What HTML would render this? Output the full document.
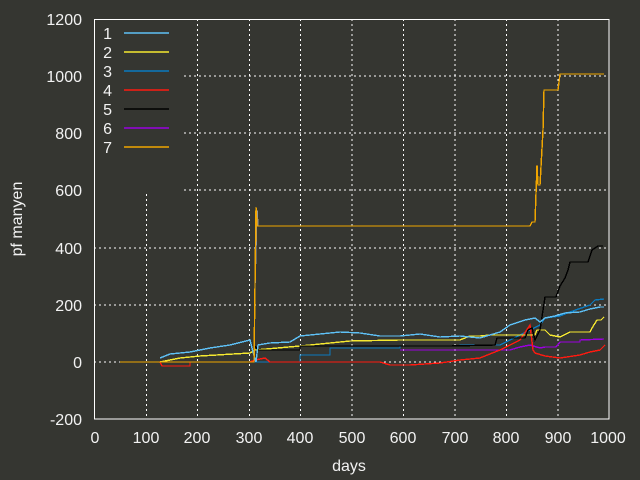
<!DOCTYPE html>
<html><head><style>html,body{margin:0;padding:0;background:#353631}svg{display:block}</style></head><body>
<svg width="640" height="480" xmlns="http://www.w3.org/2000/svg" font-family="Liberation Sans, sans-serif" font-size="16" fill="#f2f2f2">
<rect width="640" height="480" fill="#353631"/>
<g stroke="#fff" stroke-width="1" stroke-dasharray="2,3">
<line x1="94" y1="76" x2="609" y2="76"/><line x1="94" y1="133" x2="609" y2="133"/><line x1="94" y1="190" x2="609" y2="190"/><line x1="94" y1="248" x2="609" y2="248"/><line x1="94" y1="305" x2="609" y2="305"/><line x1="94" y1="362" x2="609" y2="362"/>
<line x1="146.5" y1="19" x2="146.5" y2="419"/><line x1="197.5" y1="19" x2="197.5" y2="419"/><line x1="249.5" y1="19" x2="249.5" y2="419"/><line x1="300.5" y1="19" x2="300.5" y2="419"/><line x1="352" y1="19" x2="352" y2="419"/><line x1="403.5" y1="19" x2="403.5" y2="419"/><line x1="455" y1="19" x2="455" y2="419"/><line x1="506.5" y1="19" x2="506.5" y2="419"/><line x1="558" y1="19" x2="558" y2="419"/>
</g>
<rect x="95" y="20" width="86" height="173" fill="#353631"/>
<g fill="none" stroke-width="1.4" shape-rendering="crispEdges">
<polyline stroke="#0a7ac0" points="200,362 300,362 300,355 330,355 330,348 400,348 400,346 460,346 460,345 500,345 510,340 530,330 540,325 545,318 560,316 570,312 590,305 595,300 604,299"/>
<polyline stroke="#9a00e0" points="400,350 510,350 520,347 530,345 540,348 545,347 556,347 560,342 580,342 580,340 604,339"/>
<polyline stroke="#ff1a10" points="160,362 162,366 190,366 190,362 250,362 255,360 265,358 270,362 300,362 380,362 390,365 410,365 440,363 460,360 480,358 500,350 510,345 520,340 528,328 530,325 533,350 535,353 545,356 560,358 580,355 590,352 600,350 605,345"/>
<polyline stroke="#f5e830" points="160,362 180,358 200,356 250,353 255,350 300,346 330,343 350,341 400,340 460,340 470,336 480,336 490,335 535,335 537,330 545,330 550,335 560,337 570,332 590,332 592,328 597,320 601,320 604,317"/>
<polyline stroke="#000" points="255,346 258,350 300,350 300,346 450,346 495,345 497,338 525,338 528,330 532,328 535,340 540,330 545,297 556,297 560,286 565,278 568,270 570,262 588,262 592,250 598,246 603,246"/>
<polyline stroke="#5ec0f5" points="160,358 170,354 190,352 210,348 230,345 250,340 253,352 256,362 258,345 270,343 290,342 300,336 320,334 340,332 360,333 380,336 400,336 420,334 440,337 460,336 480,338 500,332 510,325 525,320 535,318 540,322 545,318 555,316 565,313 580,312 590,309 600,307 604,307"/>
<polyline stroke="#999" points="254,362 255,285 257,210 258,226"/>
<polyline stroke="#f0a500" points="120,362 254,362 255,285 256,207 257,226 530,226 532,222 535,222 537,165 538,185 540,185 543,130 544,90 558,90 560,74 604,74"/>
</g>
<rect x="94.5" y="19.5" width="514.5" height="399.5" fill="none" stroke="#fff"/>
<g stroke-width="1.4" fill="none">
<line x1="124" y1="33" x2="169" y2="33" stroke="#5ec0f5"/>
<line x1="124" y1="52" x2="169" y2="52" stroke="#f5e830"/>
<line x1="124" y1="71" x2="169" y2="71" stroke="#0a7ac0"/>
<line x1="124" y1="90" x2="169" y2="90" stroke="#ff1a10"/>
<line x1="124" y1="109" x2="169" y2="109" stroke="#000"/>
<line x1="124" y1="128" x2="169" y2="128" stroke="#9a00e0"/>
<line x1="124" y1="147" x2="169" y2="147" stroke="#f0a500"/>
</g>
<g text-anchor="end">
<text x="112" y="39">1</text><text x="112" y="58">2</text><text x="112" y="77">3</text><text x="112" y="96">4</text><text x="112" y="115">5</text><text x="112" y="134">6</text><text x="112" y="153">7</text>
<text x="82" y="25">1200</text><text x="82" y="82">1000</text><text x="82" y="139">800</text><text x="82" y="196">600</text><text x="82" y="254">400</text><text x="82" y="311">200</text><text x="82" y="368">0</text><text x="82" y="425">-200</text>
</g>
<g text-anchor="middle">
<text x="95" y="443">0</text><text x="146" y="443">100</text><text x="197" y="443">200</text><text x="249" y="443">300</text><text x="300" y="443">400</text><text x="352" y="443">500</text><text x="403" y="443">600</text><text x="455" y="443">700</text><text x="506" y="443">800</text><text x="558" y="443">900</text><text x="608" y="443">1000</text>
<text x="349" y="471">days</text>
<text transform="translate(22,219) rotate(-90)">pf manyen</text>
</g>
</svg>
</body></html>
